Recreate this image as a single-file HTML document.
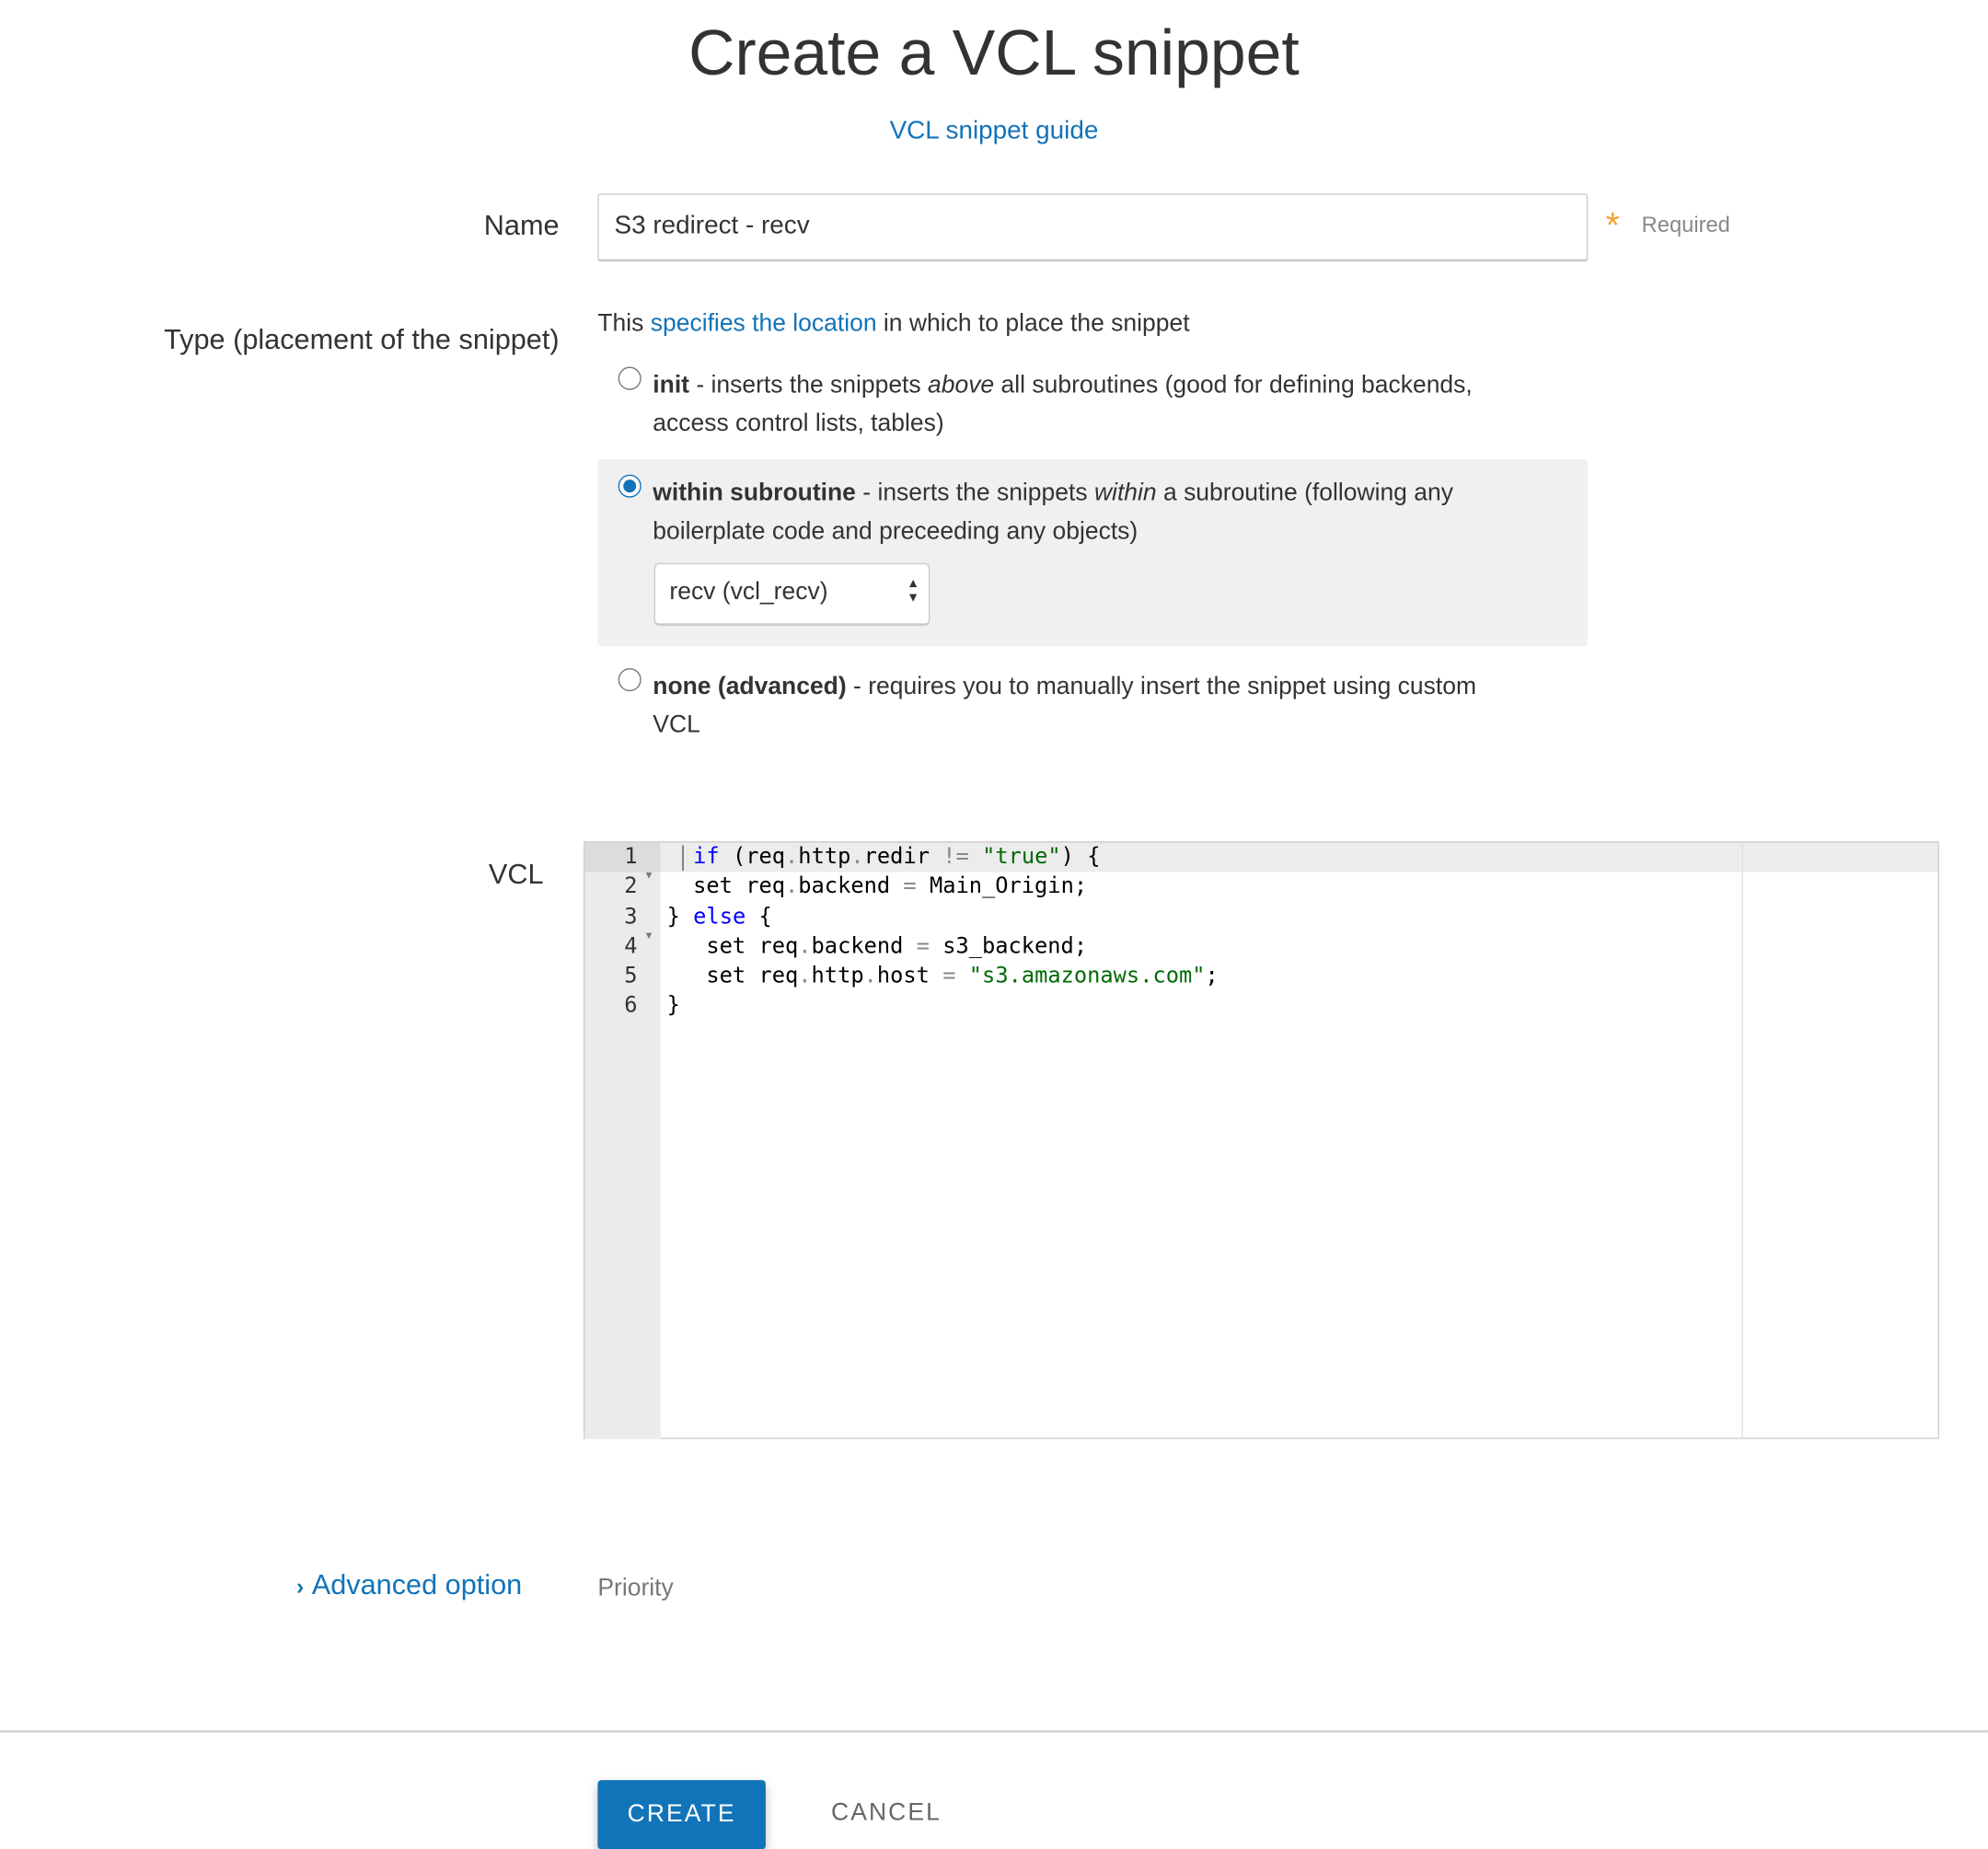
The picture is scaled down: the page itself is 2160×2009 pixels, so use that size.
<!DOCTYPE html>
<html><head><meta charset="utf-8"><style>
html,body{margin:0;padding:0;background:#fff;}
body{width:2160px;height:2002px;overflow:hidden;position:relative;font-family:"Liberation Sans",sans-serif;color:#333;}
#w{position:absolute;left:0;top:0;width:1550px;height:1437px;transform:scale(1.3935);transform-origin:0 0;}
.a{position:absolute;white-space:nowrap;}
.blue{color:#1273b8;}
.radio{position:absolute;width:16px;height:16px;border:1px solid #777;border-radius:50%;background:#fff;}
.code{position:absolute;left:520px;font-family:"DejaVu Sans Mono","Liberation Mono",monospace;font-size:17px;line-height:23.3px;white-space:pre;color:#000;}
.ln{position:absolute;left:455px;width:42px;text-align:right;font-family:"DejaVu Sans Mono",monospace;font-size:17px;line-height:23.3px;color:#333;}
.kw{color:#0000ff}.str{color:#036a07}.op{color:#888}
</style></head><body><div id="w">
<div class="a" style="left:0;width:1550px;text-align:center;top:12px;font-size:50px;font-weight:300;color:#333;">Create a VCL snippet</div>
<div class="a blue" style="left:0;width:1550px;text-align:center;top:91px;font-size:20px;">VCL snippet guide</div>

<div class="a" style="right:1114px;top:163px;font-size:22px;">Name</div>
<div class="a" style="left:466px;top:151px;width:770px;height:50px;border:1px solid #ccc;border-bottom:2px solid #ccc;border-radius:2px;"></div>
<div class="a" style="left:479px;top:165px;font-size:20px;">S3 redirect - recv</div>
<div class="a" style="left:1252px;top:160px;font-size:28px;color:#f7a133;">*</div>
<div class="a" style="left:1280px;top:166px;font-size:17px;color:#888;">Required</div>

<div class="a" style="right:1114px;top:252px;font-size:22px;">Type (placement of the snippet)</div>
<div class="a" style="left:466px;top:242px;font-size:19px;">This <span class="blue">specifies the location</span> in which to place the snippet</div>

<div class="radio" style="left:482px;top:286px;"></div>
<div class="a" style="left:509px;top:286px;font-size:19px;line-height:30px;"><b>init</b> - inserts the snippets <i>above</i> all subroutines (good for defining backends,<br>access control lists, tables)</div>

<div class="a" style="left:466px;top:358px;width:772px;height:146px;background:#f0f0f0;border-radius:3px;"></div>
<div class="radio" style="left:482px;top:370px;border-color:#1273b8;"><div style="position:absolute;left:3px;top:3px;width:10px;height:10px;border-radius:50%;background:#1273b8;"></div></div>
<div class="a" style="left:509px;top:370px;font-size:19px;line-height:30px;"><b>within subroutine</b> - inserts the snippets <i>within</i> a subroutine (following any<br>boilerplate code and preceeding any objects)</div>
<div class="a" style="left:510px;top:439px;width:213px;height:46px;background:#fff;border:1px solid #ccc;border-bottom:2px solid #ccc;border-radius:4px;"></div>
<div class="a" style="left:522px;top:451px;font-size:19px;">recv (vcl_recv)</div>
<div class="a" style="left:707px;top:450px;font-size:10px;line-height:11px;color:#333;">▲<br>▼</div>

<div class="radio" style="left:482px;top:521px;"></div>
<div class="a" style="left:509px;top:521px;font-size:19px;line-height:30px;"><b>none (advanced)</b> - requires you to manually insert the snippet using custom<br>VCL</div>

<div class="a" style="left:381px;top:669px;font-size:22px;">VCL</div>
<div class="a" style="left:455px;top:656px;width:1055px;height:464px;border:1px solid #ccc;background:#fff;"></div>
<div class="a" style="left:456px;top:657px;width:59px;height:465px;background:#ebebeb;"></div>
<div class="a" style="left:456px;top:657px;width:59px;height:23px;background:#dcdcdc;"></div>
<div class="a" style="left:515px;top:657px;width:996px;height:23px;background:#ececec;"></div>
<div class="a" style="left:1358px;top:657px;width:1px;height:465px;background:#e0e0e0;"></div>
<div class="a" style="left:532px;top:659px;width:1px;height:20px;background:#555;"></div>
<div class="ln" style="top:657px;">1<br>2<br>3<br>4<br>5<br>6</div>
<div class="a" style="left:502px;top:660px;font-size:8px;line-height:46.6px;color:#777;">▼<br>▼</div>
<div class="code" style="top:657px;"><span class="kw">  if</span> (req<span class="op">.</span>http<span class="op">.</span>redir <span class="op">!=</span> <span class="str">"true"</span>) {
  set req<span class="op">.</span>backend <span class="op">=</span> Main_Origin;
} <span class="kw">else</span> {
   set req<span class="op">.</span>backend <span class="op">=</span> s3_backend;
   set req<span class="op">.</span>http<span class="op">.</span>host <span class="op">=</span> <span class="str">"s3.amazonaws.com"</span>;
}</div>

<div class="a blue" style="left:231px;top:1223px;font-size:22px;"><b style="font-size:18px;">›</b>&nbsp;Advanced option</div>
<div class="a" style="left:466px;top:1228px;font-size:19px;color:#777;">Priority</div>

<div class="a" style="left:0;top:1349px;width:1550px;height:2px;background:#d5d5d5;"></div>
<div class="a" style="left:466px;top:1388px;width:131px;height:54px;background:#1274b8;border-radius:3px;box-shadow:0 4px 8px rgba(0,0,0,0.25);color:#fff;font-size:19px;letter-spacing:1.5px;text-align:center;line-height:54px;">CREATE</div>
<div class="a" style="left:648px;top:1403px;font-size:19px;letter-spacing:1.5px;color:#666;">CANCEL</div>
</div></body></html>
